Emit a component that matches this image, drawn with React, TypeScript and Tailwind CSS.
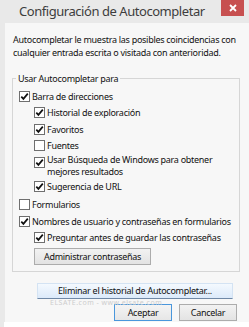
import React from "react";

function Box({ checked }: { checked: boolean }) {
  return (
    <span className="w-[11px] h-[11px] border border-[#6f6f6f] bg-white flex items-center justify-center shrink-0">
      {checked && (
        <svg width="9" height="9" viewBox="0 0 9 9">
          <path d="M1.3 4.6 L3.4 6.9 L7.8 1.6" stroke="#111" strokeWidth="1.7" fill="none" />
        </svg>
      )}
    </span>
  );
}

function Row({ checked, label, indent, mt }: { checked: boolean; label: string; indent?: boolean; mt: string }) {
  return (
    <div className={`flex items-center h-[13px] ${mt} ${indent ? "pl-[15px]" : ""}`}>
      <Box checked={checked} />
      <span className="ml-[2px] leading-[13px] whitespace-nowrap">{label}</span>
    </div>
  );
}

export default function App() {
  return (
    <div
      className="w-[249px] h-[327px] bg-[#e9e9e9] flex flex-col overflow-hidden relative text-[#111] text-[9px] tracking-[-0.28px]"
      style={{ fontFamily: '"Noto Sans", "Open Sans", sans-serif' }}
    >
      <div className="h-[23px] flex items-start shrink-0">
        <div className="pl-[19px] pt-[2px] text-[13px] leading-[18px] tracking-[-0.45px] text-[#3d3d3d] whitespace-nowrap">
          Configuración de Autocompletar
        </div>
        <div className="ml-auto mr-[5px] w-[23px] h-[16px] bg-[#c75050] flex items-center justify-center">
          <svg width="8" height="8" viewBox="0 0 8 8">
            <path d="M1 1 L7 7 M7 1 L1 7" stroke="#fff" strokeWidth="1.8" />
          </svg>
        </div>
      </div>
      <div className="ml-[5px] flex-1 bg-[#f7f7f7] flex flex-col">
        <p className="ml-[8px] mt-[9.5px] leading-[13px] whitespace-nowrap">
          Autocompletar le muestra las posibles coincidencias con
          <br />
          cualquier entrada escrita o visitada con anterioridad.
        </p>
        <fieldset className="ml-[7px] mt-[13px] w-[228px] min-w-0 border border-[#d6d6d6] p-0">
          <legend className="ml-[3px] px-[2px] leading-[13px]">Usar Autocompletar para</legend>
          <div className="pl-[6px] pb-[6px] flex flex-col">
            <Row checked label="Barra de direcciones" mt="mt-[5px]" />
            <Row checked indent label="Historial de exploración" mt="mt-[3.5px]" />
            <Row checked indent label="Favoritos" mt="mt-[4px]" />
            <Row checked={false} indent label="Fuentes" mt="mt-[3px]" />
            <div className="flex items-start mt-[2px] pl-[15px]">
              <span className="mt-[3px]">
                <Box checked />
              </span>
              <span className="ml-[2px] leading-[12px]">
                Usar Búsqueda de Windows para obtener
                <br />
                mejores resultados
              </span>
            </div>
            <Row checked indent label="Sugerencia de URL" mt="mt-[2px]" />
            <Row checked={false} label="Formularios" mt="mt-[5px]" />
            <Row checked label="Nombres de usuario y contraseñas en formularios" mt="mt-[3.5px]" />
            <Row checked indent label="Preguntar antes de guardar las contraseñas" mt="mt-[3px]" />
            <div className="ml-[15px] mt-[4.5px] w-[117px] h-[17px] border border-[#acacac] bg-gradient-to-b from-[#f2f2f2] to-[#e3e3e3] flex items-center justify-center whitespace-nowrap">
              Administrar contraseñas
            </div>
          </div>
        </fieldset>
        <div className="ml-[32px] mt-[11px] w-[196px] h-[16px] border border-[#d4e3f3] border-b-[#6f88a6] bg-gradient-to-b from-[#f4f9fe] to-[#dceafa] flex items-center justify-center whitespace-nowrap">
          Eliminar el historial de Autocompletar...
        </div>
        <div className="flex justify-end gap-[7px] mr-[12px] mt-[5px]">
          <div className="w-[58px] h-[17px] border border-[#4a97dc] bg-gradient-to-b from-[#f4f4f4] to-[#e6e6e6] flex items-center justify-center">
            Aceptar
          </div>
          <div className="w-[58px] h-[17px] border border-[#acacac] bg-gradient-to-b from-[#f2f2f2] to-[#e3e3e3] flex items-center justify-center">
            Cancelar
          </div>
        </div>
      </div>
      <div className="h-[5px] ml-[4px] bg-white shrink-0" />
      <div className="absolute left-[50px] top-[299px] text-[7px] leading-[8px] text-[#cdcdcd] whitespace-nowrap tracking-[0.5px]">
        ELSATE.com - www.elsate.com
      </div>
    </div>
  );
}
